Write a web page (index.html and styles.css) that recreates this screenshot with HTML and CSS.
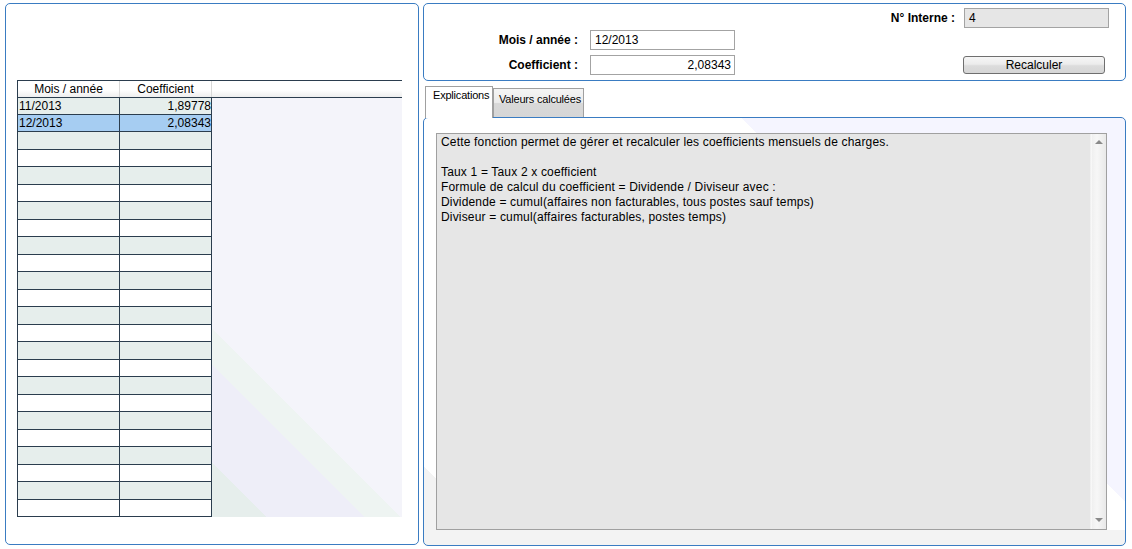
FILE: index.html
```html
<!DOCTYPE html>
<html lang="fr">
<head>
<meta charset="utf-8">
<title>Coefficients mensuels</title>
<link rel="stylesheet" href="styles.css">
</head>
<body>
<div class="app">
  <section class="panel left-panel">
    <div class="grid">
      <div class="grid-head">
        <div class="hcell c1">Mois / année</div>
        <div class="hcell c2">Coefficient</div>
        <div class="hfill"></div>
      </div>
      <div class="grid-body">
        <div class="rows">
          <div class="row"><div class="cell c1">11/2013</div><div class="cell c2">1,89778</div></div>
          <div class="row sel"><div class="cell c1">12/2013</div><div class="cell c2">2,08343</div></div>
          <div class="row"><div class="cell c1"></div><div class="cell c2"></div></div>
          <div class="row"><div class="cell c1"></div><div class="cell c2"></div></div>
          <div class="row"><div class="cell c1"></div><div class="cell c2"></div></div>
          <div class="row"><div class="cell c1"></div><div class="cell c2"></div></div>
          <div class="row"><div class="cell c1"></div><div class="cell c2"></div></div>
          <div class="row"><div class="cell c1"></div><div class="cell c2"></div></div>
          <div class="row"><div class="cell c1"></div><div class="cell c2"></div></div>
          <div class="row"><div class="cell c1"></div><div class="cell c2"></div></div>
          <div class="row"><div class="cell c1"></div><div class="cell c2"></div></div>
          <div class="row"><div class="cell c1"></div><div class="cell c2"></div></div>
          <div class="row"><div class="cell c1"></div><div class="cell c2"></div></div>
          <div class="row"><div class="cell c1"></div><div class="cell c2"></div></div>
          <div class="row"><div class="cell c1"></div><div class="cell c2"></div></div>
          <div class="row"><div class="cell c1"></div><div class="cell c2"></div></div>
          <div class="row"><div class="cell c1"></div><div class="cell c2"></div></div>
          <div class="row"><div class="cell c1"></div><div class="cell c2"></div></div>
          <div class="row"><div class="cell c1"></div><div class="cell c2"></div></div>
          <div class="row"><div class="cell c1"></div><div class="cell c2"></div></div>
          <div class="row"><div class="cell c1"></div><div class="cell c2"></div></div>
          <div class="row"><div class="cell c1"></div><div class="cell c2"></div></div>
          <div class="row"><div class="cell c1"></div><div class="cell c2"></div></div>
          <div class="row"><div class="cell c1"></div><div class="cell c2"></div></div>
        </div>
        <div class="filler"></div>
      </div>
    </div>
  </section>

  <div class="right-col">
    <section class="panel form-panel">
      <label class="lbl lbl-interne">N° Interne :</label>
      <div class="field readonly f-interne">4</div>
      <label class="lbl lbl-mois">Mois / année :</label>
      <div class="field f-mois">12/2013</div>
      <label class="lbl lbl-coef">Coefficient :</label>
      <div class="field num f-coef">2,08343</div>
      <button class="btn btn-recalc">Recalculer</button>
    </section>

    <div class="tabs">
      <div class="tab active">Explications</div>
      <div class="tab">Valeurs calculées</div>
    </div>

    <section class="panel tab-panel">
      <div class="memo">
        <div class="memo-text">Cette fonction permet de gérer et recalculer les coefficients mensuels de charges.

Taux 1 = Taux 2 x coefficient
Formule de calcul du coefficient = Dividende / Diviseur avec :
Dividende = cumul(affaires non facturables, tous postes sauf temps)
Diviseur = cumul(affaires facturables, postes temps)</div>
        <div class="scrollbar">
          <span class="arrow up"></span>
          <span class="arrow down"></span>
        </div>
      </div>
    </section>
  </div>
</div>
</body>
</html>
```

FILE: styles.css
```css
* { box-sizing: border-box; }

html, body {
  margin: 0;
  padding: 0;
  background: #ffffff;
}

body {
  font-family: "Liberation Sans", Arial, sans-serif;
  font-size: 12px;
  color: #000;
}

.app {
  display: flex;
  gap: 4px;
  padding: 3px 0 0 5px;
  width: 1132px;
  height: 549px;
}

.panel {
  border: 1px solid #3a7cc2;
  border-radius: 5px;
  background: #fff;
}

/* ---------- left panel / grid ---------- */
.left-panel {
  width: 414px;
  height: 542px;
  padding: 76px 0 0 11px;
}

.grid {
  width: 385px;
}

.grid-head {
  display: flex;
  height: 18px;
  border-top: 1px solid #2b3d4e;
  border-bottom: 1px solid #2b3d4e;
  background: linear-gradient(#ffffff 0%, #ffffff 55%, #eeeeee 100%);
}

.hcell {
  line-height: 16px;
  text-align: center;
  border-right: 1px solid #d8d8d8;
}

.hcell.c1 {
  width: 103px;
  border-left: 1px solid #2b3d4e;
}

.hcell.c2 {
  width: 92px;
}

.hfill {
  flex: 1;
}

.grid-body {
  display: flex;
}

.rows {
  width: 195px;
}

.row {
  display: flex;
  height: 18px;
  background: #ffffff;
}

.row:nth-child(odd) {
  background: #e6eeec;
}

.row:nth-child(even),
.row:first-child {
  height: 17px;
}

.row.sel {
  background: #a6cdf2;
}

.cell {
  border-right: 1px solid #2b3d4e;
  border-bottom: 1px solid #2b3d4e;
  line-height: 16px;
  white-space: nowrap;
}

.cell.c1 {
  width: 103px;
  border-left: 1px solid #2b3d4e;
  padding-left: 1px;
}

.cell.c2 {
  width: 92px;
  text-align: right;
  padding-right: 0;
}

.filler {
  flex: 1;
  background: linear-gradient(45deg, #e6eeec 0 9%, #eeeef8 9% 25%, #eef4f2 25% 31%, #f4f4fa 31% 100%);
}

/* ---------- right column ---------- */
.right-col {
  width: 703px;
  display: flex;
  flex-direction: column;
}

.form-panel {
  height: 78px;
  display: grid;
  grid-template-columns: 154px 12px 145px 1fr 9px 145px;
  grid-template-rows: 20px 22px 25px;
  padding: 4px 16px 5px 0;
}

.lbl {
  font-weight: bold;
  text-align: right;
  line-height: 20px;
  height: 20px;
  align-self: end;
  white-space: nowrap;
}

.lbl-interne { grid-column: 4; grid-row: 1; }
.lbl-mois    { grid-column: 1; grid-row: 2; }
.lbl-coef    { grid-column: 1; grid-row: 3; }

.field {
  height: 20px;
  border: 1px solid #a3a3a3;
  background: #fff;
  padding: 0 4px;
  line-height: 18px;
  align-self: end;
  white-space: nowrap;
}

.field.readonly {
  background: #e6e6e6;
}

.field.num {
  text-align: right;
  padding-right: 3px;
}

.f-interne { grid-column: 6; grid-row: 1; }
.f-mois    { grid-column: 3; grid-row: 2; }
.f-coef    { grid-column: 3; grid-row: 3; }

.btn {
  grid-column: 6;
  grid-row: 3;
  align-self: end;
  width: 142px;
  height: 18px;
  margin: 0 0 1px -1px;
  padding: 0;
  font-family: inherit;
  font-size: 12px;
  color: #000;
  line-height: 16px;
  border: 1px solid #6f6f6f;
  border-radius: 3px;
  background: linear-gradient(#f6f6f6 0%, #ececec 45%, #dcdcdc 55%, #d6d6d6 100%);
}

/* ---------- tabs ---------- */
.tabs {
  display: flex;
  align-items: flex-end;
  height: 32px;
  margin-top: 5px;
  padding-left: 2px;
  position: relative;
  z-index: 1;
  margin-bottom: -1px;
}

.tab {
  height: 29px;
  margin-bottom: 1px;
  border: 1px solid #a0a0a0;
  border-bottom: none;
  padding: 4px 0 0 5px;
  font-size: 11px;
  letter-spacing: -0.2px;
  width: 91px;
  background: linear-gradient(#f5f5f5 0%, #ebebeb 48%, #d8d8d8 52%, #d6d6d6 100%);
  white-space: nowrap;
}

.tab.active {
  height: 32px;
  margin-bottom: 0;
  width: 68px;
  padding: 2px 0 0 7px;
  background: #fff;
}

.tab-panel {
  height: 429px;
  padding: 15px 17px 15px 12px;
  background:
    linear-gradient(45deg, #f3f3f3 0 7%, transparent 7%),
    linear-gradient(to top, #f3f3f3 0 15px, transparent 15px),
    linear-gradient(45deg, #ffffff 0 66%, #f5f5ff 66%);
}

.memo {
  display: flex;
  width: 671px;
  height: 397px;
  border: 1px solid #a0a0a0;
  background: #e6e6e6;
}

.memo-text {
  flex: 1;
  padding: 1px 4px;
  line-height: 15px;
  letter-spacing: 0.17px;
  white-space: pre-line;
}

.scrollbar {
  width: 16px;
  position: relative;
  background: linear-gradient(90deg, #e2e2e2 0, #ffffff 1px, #f0f0f0 2px, #f7f7f7 7px, #efefef 12px, #e9e9e9 16px);
}

.arrow {
  position: absolute;
  left: 5px;
  width: 0;
  height: 0;
  border-left: 4px solid transparent;
  border-right: 4px solid transparent;
}

.arrow.up {
  top: 6px;
  border-bottom: 4px solid #8a8a8a;
}

.arrow.down {
  bottom: 7px;
  border-top: 4px solid #8a8a8a;
}
```
